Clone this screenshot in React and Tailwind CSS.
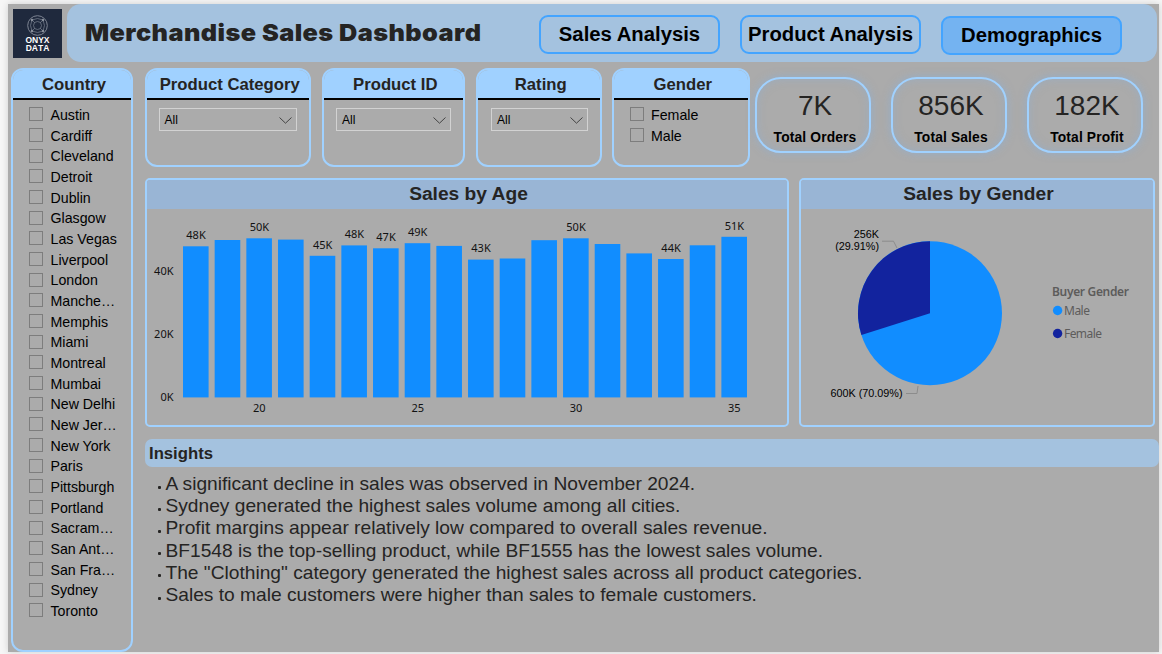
const COUNTRIES = [
  'Austin', 'Cardiff', 'Cleveland', 'Detroit', 'Dublin', 'Glasgow', 'Las Vegas', 'Liverpool', 'London',
  'Manche…', 'Memphis', 'Miami', 'Montreal', 'Mumbai', 'New Delhi', 'New Jer…', 'New York', 'Paris',
  'Pittsburgh', 'Portland', 'Sacram…', 'San Ant…', 'San Fra…', 'Sydney', 'Toronto',
];

const INSIGHTS = [
  'A significant decline in sales was observed in November 2024.',
  'Sydney generated the highest sales volume among all cities.',
  'Profit margins appear relatively low compared to overall sales revenue.',
  'BF1548 is the top-selling product, while BF1555 has the lowest sales volume.',
  'The "Clothing" category generated the highest sales across all product categories.',
  'Sales to male customers were higher than sales to female customers.',
];

// Bar tops in chart coordinates, with the data label where one is shown.
const BARS = [
  [246.3, '48K'], [240], [238.3, '50K'], [239.6], [255.8, '45K'], [245.4, '48K'], [248.3, '47K'],
  [243.2, '49K'], [245.9], [259.6, '43K'], [258.5], [240.2], [238.3, '50K'], [244], [253.4],
  [259, '44K'], [245.3], [236.8, '51K'],
];
const BASELINE = 397.4;
const barX = (i) => 183 + i * 31.67;

function Logo() {
  return (
    <div className="mt-[5px] ml-[5px] flex h-[49px] w-[49px] flex-col items-center bg-[#1f293d] text-white">
      <svg className="mt-[6px] h-[21px] w-[21px] shrink-0" viewBox="-10.5 -10.5 21 21" fill="none" stroke="#7d8492" strokeWidth="0.7">
        <circle r="9.8" strokeWidth="1" />
        <circle r="4" />
        <path d="M-5.5 -5.5 L-2.8 -2.8 M5.5 -5.5 L2.8 -2.8 M-5.5 5.5 L-2.8 2.8 M5.5 5.5 L2.8 2.8" />
        <path d="M-5.5 -5.5 Q0 -8.5 5.5 -5.5 Q8.5 0 5.5 5.5 Q0 8.5 -5.5 5.5 Q-8.5 0 -5.5 -5.5Z" />
        <g fill="#8b919d" stroke="none">
          <circle cx="-5.5" cy="-5.5" r="1.2" />
          <circle cx="5.5" cy="-5.5" r="1.2" />
          <circle cx="-5.5" cy="5.5" r="1.2" />
          <circle cx="5.5" cy="5.5" r="1.2" />
        </g>
      </svg>
      <div className="mt-[1px] flex flex-col items-center text-[8.5px] font-bold [font-kerning:none]">
        <div className="h-[7.5px] leading-[7.5px]">ONYX</div>
        <div className="h-[7.5px] leading-[7.5px]">DATA</div>
      </div>
    </div>
  );
}

function NavButton({ children, className }) {
  return (
    <div className={`flex h-[39px] w-[181px] shrink-0 items-center justify-center rounded-[9px] border-2 border-[#43a4ff] text-[20.3px] font-bold whitespace-nowrap text-black ${className}`}>
      {children}
    </div>
  );
}

function FilterCard({ title, className, children }) {
  return (
    <div className={`flex shrink-0 flex-col overflow-hidden rounded-[12px] border-2 border-[#a0d1ff] ${className}`}>
      <div className="flex h-[30px] shrink-0 items-center justify-center border-b-2 border-black bg-[#a0d1ff] pt-[1px] pl-[4px] text-[16.7px] font-bold whitespace-nowrap text-[#252423]">
        {title}
      </div>
      {children}
    </div>
  );
}

function Dropdown({ className }) {
  return (
    <div className={`mt-[8px] flex h-[23px] items-center justify-between border border-[#d2d2d2] pr-[4px] pl-[5px] ${className}`}>
      <span className="text-[12px] text-black">All</span>
      <svg className="mt-[2px] h-[7px] w-[13px]" viewBox="0 0 13 7" fill="none" stroke="#444" strokeWidth="1">
        <path d="M0.5 0.5 L6.5 6.2 L12.5 0.5" />
      </svg>
    </div>
  );
}

function CheckRow({ label }) {
  return (
    <div className="flex h-[20.68px] items-center">
      <span className="h-[14px] w-[14px] shrink-0 border border-[#7d7d7d]" />
      <span className="mt-[1px] ml-[7.5px] text-[14.2px] leading-[16px] whitespace-nowrap text-black">{label}</span>
    </div>
  );
}

function Kpi({ value, label, className }) {
  return (
    <div className={`flex h-[76px] w-[116px] shrink-0 flex-col items-center rounded-[26px] border-2 border-[#a0d1ff] shadow-[0_0_8px_rgba(140,175,215,0.7),inset_0_0_8px_rgba(140,175,215,0.5)] ${className}`}>
      <div className="mt-[10px] ml-[5px] text-[28px] leading-[34px] text-[#252423]">{value}</div>
      <div className="mt-[7px] ml-[5px] text-[13.8px] leading-[16px] font-bold tracking-[0.15px] whitespace-nowrap text-black">{label}</div>
    </div>
  );
}

function ChartCard({ title, className, children }) {
  return (
    <div className={`h-[249px] shrink-0 overflow-hidden rounded-[5px] border-2 border-[#a0d1ff] ${className}`}>
      <div className="flex h-[29px] items-center justify-center bg-[#99b5d5] pb-[1px] pl-[4px] text-[19.2px] font-bold text-[#252423]">
        {title}
      </div>
      {children}
    </div>
  );
}

function AgeChart() {
  return (
    <svg className="block h-[216px] w-[640px]" viewBox="147 209 640 216" fontFamily="'Noto Sans', 'Open Sans', sans-serif" fontSize="11" fill="#111">
      {BARS.map(([top, label], i) => (
        <g key={i}>
          <rect x={barX(i)} y={top} width="25.6" height={BASELINE - top} fill="#118dff" />
          {label && <text x={barX(i) + 13} y={top - 7.3} textAnchor="middle">{label}</text>}
        </g>
      ))}
      <text x="173.5" y="275" textAnchor="end">40K</text>
      <text x="173.5" y="338" textAnchor="end">20K</text>
      <text x="173.5" y="401" textAnchor="end">0K</text>
      {[20, 25, 30, 35].map((age, i) => (
        <text key={age} x={barX(2 + i * 5) + 13} y="412" textAnchor="middle">{age}</text>
      ))}
    </svg>
  );
}

function GenderChart() {
  return (
    <svg className="block h-[216px] w-[352px]" viewBox="801 209 352 216">
      <circle cx="930" cy="313.2" r="72" fill="#118dff" />
      <path d="M930 313.2 L861.4 335.1 A72 72 0 0 1 930 241.2Z" fill="#12239e" />
      <g fill="none" stroke="#8c8c8c" strokeWidth="1">
        <path d="M882 241.2 H893.5 L897 248" />
        <path d="M906 393.5 H917 L918 386" />
      </g>
      <g fontFamily="'Liberation Sans', Arial, sans-serif" fontSize="10.8" fill="#000">
        <text x="879" y="238" textAnchor="end">256K</text>
        <text x="879" y="250" textAnchor="end">(29.91%)</text>
        <text x="830.5" y="397">600K (70.09%)</text>
      </g>
      <g fontFamily="'Noto Sans', 'Open Sans', sans-serif" fontSize="12" fill="#5d5c5b">
        <text x="1052" y="296" fontWeight="600" textLength="77">Buyer Gender</text>
        <text x="1064" y="315" textLength="26">Male</text>
        <text x="1064" y="338" textLength="38">Female</text>
      </g>
      <circle cx="1057.6" cy="310.5" r="4.7" fill="#118dff" />
      <circle cx="1057.6" cy="333.5" r="4.7" fill="#12239e" />
    </svg>
  );
}

export default function App() {
  return (
    <div className="h-[654px] w-[1162px] overflow-hidden bg-[#f6f6f6] pt-[4px] pl-[8px] font-['Liberation_Sans',Arial,sans-serif]">
      <div className="flex h-[648px] w-[1151px] flex-col bg-[#ababab] shadow-[0_0_7px_rgba(0,0,0,0.16)]">
        <header className="flex h-[58px] shrink-0">
          <Logo />
          <div className="ml-[5px] flex h-[58px] w-[1090px] items-start rounded-[14px] bg-[#a4c2df]">
            <h1 className="mt-[12px] ml-[18px] w-[454px] shrink-0 origin-left scale-x-[1.075] font-['Inter','Liberation_Sans',sans-serif] text-[23.5px] leading-[34px] font-black tracking-[0.4px] whitespace-nowrap text-[#252423]">
              Merchandise Sales Dashboard
            </h1>
            <NavButton className="mt-[11px]">Sales Analysis</NavButton>
            <NavButton className="mt-[11px] ml-[20px]">Product Analysis</NavButton>
            <NavButton className="mt-[12px] ml-[20px] bg-[#74b3f1]">Demographics</NavButton>
          </div>
        </header>

        <div className="flex min-h-0 flex-1 pt-[6px]">
          <FilterCard title="Country" className="ml-[3px] h-[584px] w-[122px]">
            <div className="pt-[4px] pl-[16px]">
              {COUNTRIES.map((c) => <CheckRow key={c} label={c} />)}
            </div>
          </FilterCard>

          <main className="ml-[11.5px] flex-1">
            <div className="flex">
              <FilterCard title="Product Category" className="h-[99px] w-[166.5px]">
                <Dropdown className="ml-[12px] w-[138px]" />
              </FilterCard>
              <FilterCard title="Product ID" className="ml-[10.5px] h-[99px] w-[143.5px]">
                <Dropdown className="ml-[12.5px] w-[115px]" />
              </FilterCard>
              <FilterCard title="Rating" className="ml-[11px] h-[99px] w-[125.5px]">
                <Dropdown className="ml-[13px] w-[97px]" />
              </FilterCard>
              <FilterCard title="Gender" className="ml-[10.5px] h-[99px] w-[137.5px]">
                <div className="pt-[4px] pl-[15.5px]">
                  <CheckRow label="Female" />
                  <CheckRow label="Male" />
                </div>
              </FilterCard>
              <Kpi value="7K" label="Total Orders" className="mt-[9px] ml-[5px]" />
              <Kpi value="856K" label="Total Sales" className="mt-[9px] ml-[20px]" />
              <Kpi value="182K" label="Total Profit" className="mt-[9px] ml-[20px]" />
            </div>

            <div className="mt-[11px] flex">
              <ChartCard title="Sales by Age" className="w-[644px]">
                <AgeChart />
              </ChartCard>
              <ChartCard title="Sales by Gender" className="ml-[10px] w-[356px]">
                <GenderChart />
              </ChartCard>
            </div>

            <h2 className="mt-[12px] flex h-[28px] w-[1014px] items-center rounded-[7px] bg-[#a4c2df] pt-[2px] pl-[4.5px] text-[16.7px] font-bold text-[#252423]">
              Insights
            </h2>
            <ul className="mt-[6px] ml-[13.5px]">
              {INSIGHTS.map((line) => (
                <li key={line} className="flex h-[22.2px] items-center text-[19.18px] leading-[22px] whitespace-nowrap text-[#252423]">
                  <span className="mt-[6px] mr-[4.5px] h-[3px] w-[3px] rounded-[1px] bg-[#252423]" />
                  {line}
                </li>
              ))}
            </ul>
          </main>
        </div>
      </div>
    </div>
  );
}
